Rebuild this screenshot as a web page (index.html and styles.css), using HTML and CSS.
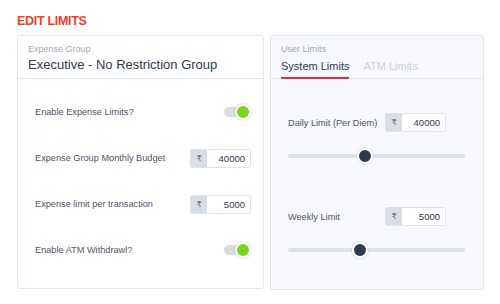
FILE: index.html
```html
<!DOCTYPE html>
<html lang="en">
  <head>
    <meta charset="UTF-8" />
    <meta name="viewport" content="width=device-width, initial-scale=1.0" />
    <title>Edit Limits</title>
    <link rel="stylesheet" href="styles.css">
  </head>
  <body>
    <h1 class="page-title">EDIT LIMITS</h1>
    <div class="cards">
      <section class="card">
        <div class="card-head">
          <div class="caption">Expense Group</div>
          <div class="group-name">Executive - No Restriction Group</div>
        </div>
        <div class="card-body">
          <div class="row">
            <span class="label">Enable Expense Limits?</span>
            <span class="toggle on"><span class="knob"></span></span>
          </div>
          <div class="row">
            <span class="label">Expense Group Monthly Budget</span>
            <span class="amount"><span class="cur">₹</span><span class="val">40000</span></span>
          </div>
          <div class="row">
            <span class="label">Expense limit per transaction</span>
            <span class="amount"><span class="cur">₹</span><span class="val">5000</span></span>
          </div>
          <div class="row">
            <span class="label">Enable ATM Withdrawl?</span>
            <span class="toggle on"><span class="knob"></span></span>
          </div>
        </div>
      </section>

      <section class="card card-alt">
        <div class="card-head tabs-head">
          <div class="caption">User Limits</div>
          <div class="tabs">
            <span class="tab active">System Limits</span>
            <span class="tab">ATM Limits</span>
          </div>
        </div>
        <div class="card-body limits">
          <div class="limit">
            <div class="limit-row">
              <span class="limit-label">Daily Limit (Per Diem)</span>
              <span class="amount"><span class="cur">₹</span><span class="val">40000</span></span>
            </div>
            <div class="slider"><span class="thumb" style="left: 43.5%"></span></div>
          </div>
          <div class="limit">
            <div class="limit-row">
              <span class="limit-label">Weekly Limit</span>
              <span class="amount"><span class="cur">₹</span><span class="val">5000</span></span>
            </div>
            <div class="slider"><span class="thumb" style="left: 40.5%"></span></div>
          </div>
        </div>
      </section>
    </div>
  </body>
</html>
```

FILE: styles.css
```css
* {
  box-sizing: border-box;
  margin: 0;
  padding: 0;
}

body {
  font-family: "Liberation Sans", Arial, "DejaVu Sans", sans-serif;
  color: #4d5464;
  background-color: #fff;
  padding: 14px 16px 0 17px;
}

.page-title {
  font-size: 12.5px;
  font-weight: bold;
  letter-spacing: -0.3px;
  color: #f0402c;
  line-height: 15px;
  height: 21px;
}

.cards {
  display: flex;
  gap: 6px;
  align-items: flex-start;
}

.card {
  width: 247px;
  border: 1px solid #e3e6ee;
  border-radius: 3px;
  background-color: #fff;
}

.card-alt {
  width: 214px;
  background-color: #f7f8fc;
}

.card-head {
  height: 43px;
  border-bottom: 1px solid #e3e6ee;
  padding: 7px 10px 0 10px;
  display: flex;
  flex-direction: column;
}

.caption {
  font-size: 9px;
  color: #a3a8b2;
  line-height: 12px;
}

.group-name {
  font-size: 13px;
  color: #2e3a4f;
  line-height: 18px;
  margin-top: 1px;
}

.tabs {
  display: flex;
  gap: 14px;
  margin-top: auto;
  margin-bottom: -1px;
}

.tab {
  font-size: 11px;
  line-height: 18px;
  height: 22px;
  color: #cfd3da;
}

.tab.active {
  color: #2e3a4f;
  border-bottom: 2px solid #ea2c3c;
}

.card-body {
  padding: 10px 12px 15px 17px;
}

.row {
  height: 46px;
  display: flex;
  align-items: center;
  justify-content: space-between;
}

.label {
  font-size: 9.2px;
}

.toggle {
  width: 27px;
  height: 16px;
  position: relative;
}

.toggle::before {
  content: "";
  position: absolute;
  left: 0;
  top: 3px;
  width: 24px;
  height: 10px;
  border-radius: 5px;
  background-color: #d8dbe0;
}

.toggle .knob {
  position: absolute;
  right: 0;
  top: 0;
  width: 16px;
  height: 16px;
  border-radius: 50%;
  background-color: #7ed321;
  border: 2px solid #fff;
  box-shadow: 0 0 2px rgba(0, 0, 0, 0.25);
}

.amount {
  display: flex;
  width: 61px;
  height: 19px;
  border: 1px solid #e0e4ea;
  border-radius: 2px;
  font-size: 9.5px;
  line-height: 17px;
}

.cur {
  width: 16px;
  background-color: #d9dee6;
  text-align: center;
  color: #555d6b;
  font-size: 8px;
  font-family: "DejaVu Sans", sans-serif;
}

.val {
  flex: 1;
  background-color: #fff;
  text-align: right;
  padding-right: 5px;
  color: #2e3a4f;
}

.limits {
  padding: 34px 18px 32px 17px;
}

.limit + .limit {
  margin-top: 44px;
}

.limit-row {
  display: flex;
  align-items: center;
}

.limit-label {
  width: 97px;
  font-size: 9.2px;
}

.slider {
  position: relative;
  margin-top: 17px;
  height: 14px;
}

.slider::before {
  content: "";
  position: absolute;
  left: 0;
  right: 0;
  top: 5px;
  height: 4px;
  border-radius: 2px;
  background-color: #dde1e8;
}

.thumb {
  position: absolute;
  top: -1px;
  width: 16px;
  height: 16px;
  margin-left: -8px;
  border-radius: 50%;
  background-color: #2e3a50;
  border: 2px solid #fff;
  box-shadow: 0 0 2px rgba(0, 0, 0, 0.2);
}
```
